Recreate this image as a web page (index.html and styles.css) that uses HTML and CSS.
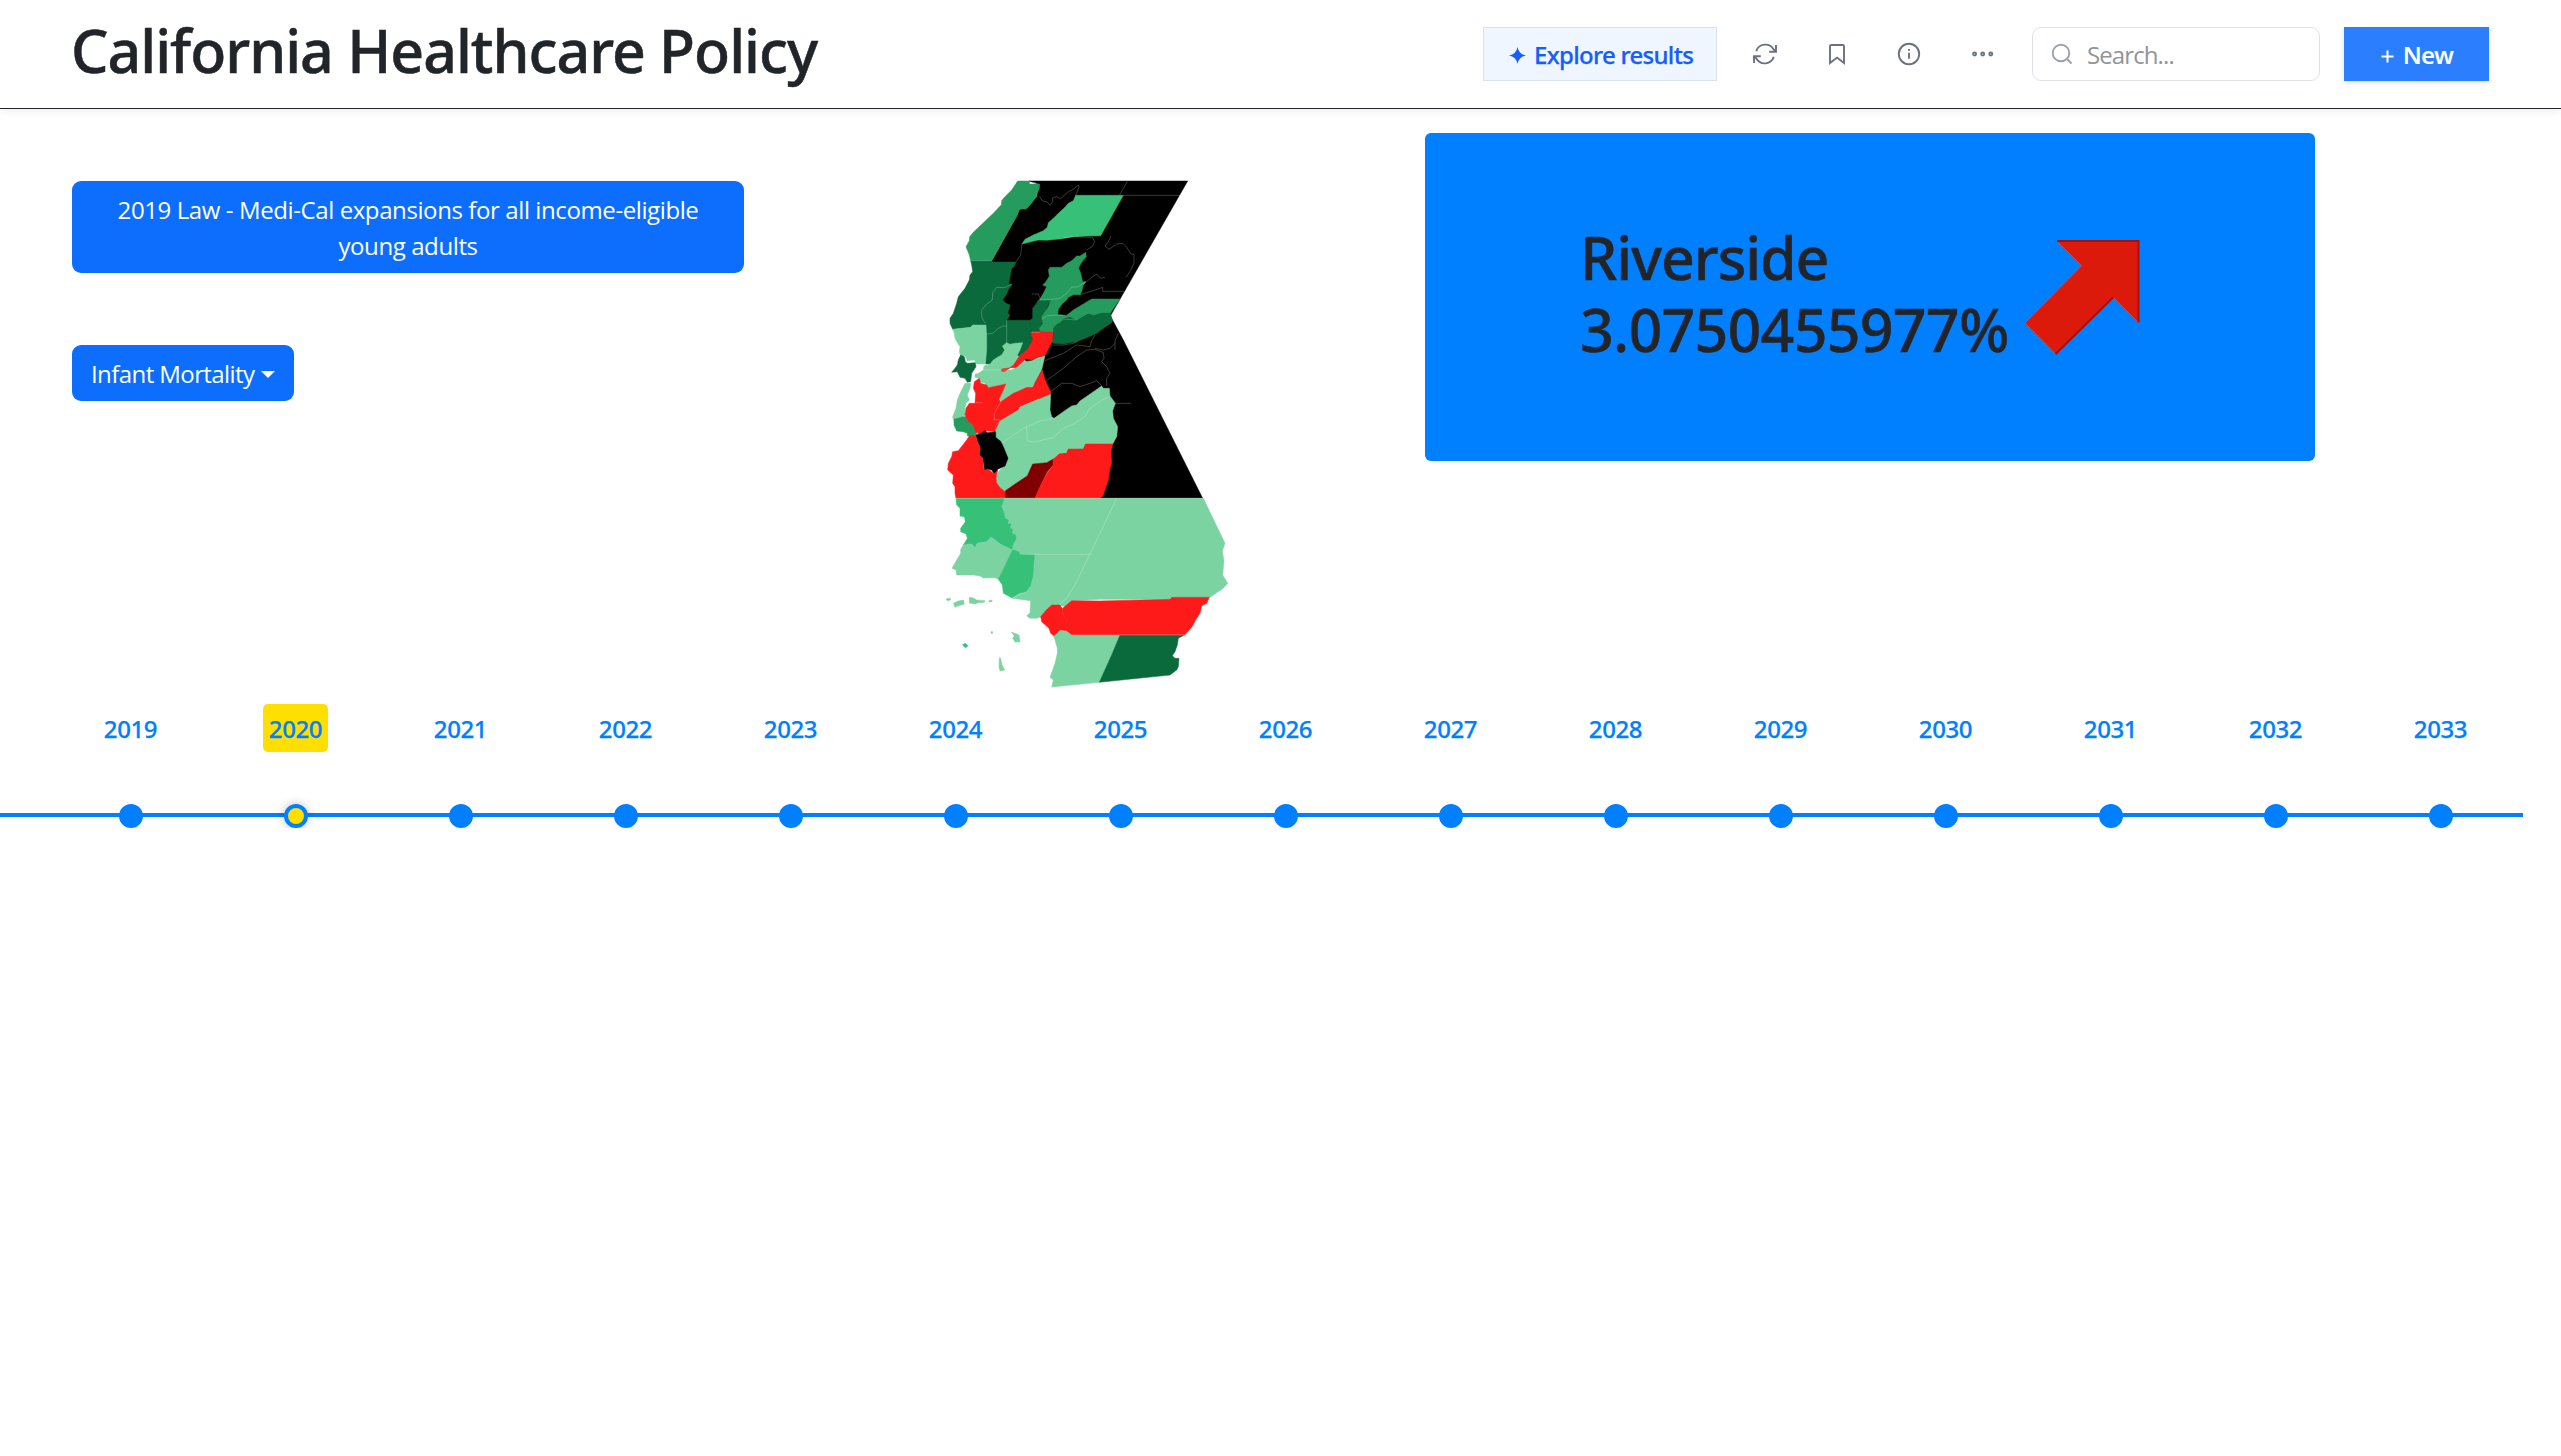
FILE: index.html
```
<!DOCTYPE html>
<html lang="en">
<head>
<meta charset="utf-8">
<title>California Healthcare Policy</title>
<link rel="stylesheet" href="styles.css">
</head>
<body>
<header class="topbar">
  <h1 class="title">California Healthcare Policy</h1>
  <div class="actions">
    <button class="explore"><svg class="star" viewBox="0 0 18 18"><path d="M9 0Q10.300 7.700 18 9Q10.300 10.300 9 18Q7.700 10.300 0 9Q7.700 7.700 9 0Z"/></svg><span>Explore results</span></button>
    <button class="icon refresh" aria-label="Refresh"><svg width="26" height="24" viewBox="0 0 26 24"><path d="M4.2 9.2A9.6 9.6 0 0 1 21.5 7.2L24 9.7M24 3v6.8h-6.8M21.8 14.8A9.6 9.6 0 0 1 4.500 16.800L2 14.300M2 21v-6.800h6.800"/></svg></button>
    <button class="icon bookmark" aria-label="Bookmark"><svg width="18" height="22" viewBox="0 0 18 22"><path d="M2 20V3.200Q2 2 3.200 2H14.800Q16 2 16 3.200V20L9 14.600Z"/></svg></button>
    <button class="icon info" aria-label="Information"><svg width="24" height="24" viewBox="0 0 24 24"><circle cx="12" cy="12" r="10.200"/><path d="M12 10.700V16.800M12 7v1.700"/></svg></button>
    <button class="icon more" aria-label="More"><svg width="24" height="8" viewBox="0 0 24 8"><circle cx="3.600" cy="4" r="1.500"/><circle cx="11.700" cy="4" r="1.500"/><circle cx="19.800" cy="4" r="1.500"/></svg></button>
    <label class="search"><svg width="22" height="22" viewBox="0 0 22 22"><circle cx="10" cy="10" r="8.300"/><path d="M16 16l4.500 4.500"/></svg><input type="text" placeholder="Search..."></label>
    <button class="new"><svg width="13" height="13" viewBox="0 0 13 13"><path d="M6.500 .5v12M.5 6.500h12"/></svg><span>New</span></button>
  </div>
</header>
<main class="dashboard">
  <section class="controls">
    <button class="btn law">2019 Law - Medi-Cal expansions for all income-eligible<br>young adults</button>
    <button class="btn metric">Infant Mortality<i class="caret"></i></button>
  </section>
  <svg class="map" viewBox="0 0 930 1590" width="310" height="530">
    <path class="none" d="M297 33H773L541 438 580 510 818 985H512L400 900 300 600 230 450 185 274 262 135 268 118 290 115 320 80 328 43Z"/>
    <path class="mid" d="M263 33H297L299 42H329L328 55 325 62 320 72V80L313 87 305 100 297 108 288 118 276 116 267 120 262 135 185 272H122L118 255 108 230 118 212 119 200 130 187 190 130 214 104 215 92 222 83 245 60Z"/>
    <path class="bright" d="M437 76H580L512 197 470 198 430 200 395 206 350 211 325 210 300 216 276 222 285 208 310 195 340 182 352 172 355 158 375 140 385 130 405 112 415 100 430 92Z"/>
    <path class="dark" d="M122 272H185L190 276H258L252 290 245 295 240 320 236 343H246L235 360 228 375 218 390 228 400 240 405 238 415 233 430 240 435 230 451H300V460L306 485 303 500 309 505 298 530 285 552 262 560 182 582H166L168 465H128L122 472 68 478 60 460V445L70 430 80 400 85 380 105 355 118 330 120 315 128 305 125 285Z"/>
    <path class="dark" d="M325 390H362L352 410 345 430 335 448 338 455 330 470 328 487H306L300 460V451L308 445V415L318 402Z"/>
    <path class="mid" d="M467 247L469 260 460 270 450 285 446 295 452 310 458 335H467L460 345 455 365 450 374 430 374 415 382 410 390 398 400 385 418 383 434 410 436 430 420 455 405 485 387H570L541 430 515 430 490 437 475 432 460 440 440 452 420 442 400 447 385 460 374 470 370 487 330 485 328 475 338 460 335 440 345 425 355 410 362 390H328L340 370 350 350 338 345 348 335 358 318 355 300 360 292H395L410 280 425 272 440 258 450 258Z"/>
    <path class="dark" d="M541 430L547 450 545 458 520 475 500 490 470 503 440 515 420 518 400 522 370 520 365 515 372 487 370 475 385 460 400 447 420 442 440 452 460 440 475 432 490 437 515 430Z"/>
    <path class="light" d="M68 478L122 472 128 465H168L170 500V540L166 582H140L133 570 112 572 105 557H92L88 545 90 530 82 518 75 505 73 490Z"/>
    <path class="dark" d="M92 555L103 560 106 575 112 580 136 578 138 590 125 610 122 635 112 637 105 625 90 622 82 605 65 607 75 595 82 585 85 570Z"/>
    <path class="light" d="M217 528L230 518 240 523 255 520 278 518 270 540 262 555 268 565 250 588 235 597 215 600 250 600 235 630 230 641 200 648 170 655 165 640 150 635 148 625 135 622V613L145 610 160 600 162 588 180 582 190 570 205 560 215 555 224 540Z"/>
    <path class="light" d="M345 557L335 600 322 625 308 650H290L250 670 215 692 207 688 212 675 228 645 245 600 265 588 280 575 305 572 325 562Z"/>
    <path class="red" d="M306 485L370 487 366 515 345 557 325 560 305 570 288 566 275 578 258 593H240L225 604H215V597L238 594 250 586 262 568 270 556 285 545 295 535 305 515 309 505 303 498Z"/>
    <path class="light" d="M105 640H122L120 655 112 675 118 690 108 700 105 715V735L95 743 70 750 68 740 78 715 82 690 88 675 95 660Z"/>
    <path class="mid" d="M72 748L100 740H108L115 755 132 765 137 778 140 792 130 798H112L112 790 100 785 80 783 72 765Z"/>
    <path class="red" d="M133 635L148 625 152 640 170 645 175 653 228 642 207 688 212 695 250 670 290 652H308L325 620 337 600 345 630 362 665V672L270 710 265 720 210 755 197 785 170 782 150 795 137 785 130 765 115 755 105 735 108 715 118 700H135L137 670 130 655Z"/>
    <path class="light" d="M210 753L265 720 272 710 362 673 360 720 365 740 372 745 400 725 425 708 440 705 450 693 515 648 520 655 538 655 540 678 556 700 548 722 550 745 563 770 560 800 548 822H467L460 837H415L410 850 388 852 370 867 350 878 308 882 292 915 270 932 225 962 215 957 200 935 198 925 205 905 225 885 233 865 222 835 215 818 197 805V782Z"/>
    <path class="none" d="M137 795L150 792 165 782 172 788 197 785V802L213 815 222 835 234 865 225 888 203 898 200 905 193 912 185 900 175 898 163 902 162 888 158 865 148 855 150 830 142 815Z"/>
    <path class="red" d="M110 810L118 798 137 795 143 820 150 830 148 855 158 865 162 900 175 898 193 912 203 900 198 925 200 938 212 955 226 965V985H78L75 970V950L68 940 70 915 53 900 55 880 65 860 68 845 85 842Z"/>
    <path class="max" d="M226 962L292 917 308 882 350 878 370 867V885L352 905 335 940 315 985H226Z"/>
    <path class="red" d="M370 867L388 852 410 850 415 837H460L467 822H548L543 845 545 880 540 895 535 930 528 950 520 975 512 985H315L335 940 352 908 370 885Z"/>
    <path class="light" d="M217 985H820L885 1120 877 1143 882 1172 878 1215 893 1240 880 1255 840 1282H722L720 1288H508L425 1292 405 1310 388 1305H365L348 1318 332 1340 322 1345H300L290 1338 300 1328 302 1292 270 1288 245 1285 240 1200 210 1020Z"/>
    <path class="bright" d="M78 985H222L214 1010 222 1030 225 1045 235 1050 233 1062H243L240 1075 248 1078 245 1090 257 1095 258 1108 250 1120 245 1140 210 1122 195 1110 183 1102 170 1115 142 1120 135 1133 125 1122 100 1125 112 1105 108 1092 92 1085V1075L106 1055 103 1040 90 1038V1015L80 1005Z"/>
    <path class="light" d="M100 1125L125 1122 135 1133 142 1120 170 1115 183 1102 195 1110 210 1122 248 1140 205 1228 195 1223 160 1224 150 1218 130 1215H80L78 1200 66 1195 80 1170 92 1150V1138Z"/>
    <path class="bright" d="M248 1140L265 1145 270 1153 313 1155 308 1220 300 1250 290 1265 270 1268 245 1283 220 1270 217 1245 205 1228Z"/>
    <path class="light" d="M390 1382H410L425 1395H570L545 1455 508 1537 365 1551 370 1530 360 1522 368 1500 375 1480 382 1450V1435L375 1410 370 1397Z"/>
    <path class="dark" d="M570 1395H763L745 1405 742 1425 735 1445 727 1457 735 1465H747L745 1490 740 1500 720 1515 508 1537 545 1455Z"/>
    <path class="red" d="M332 1340L348 1320 365 1305H390L398 1318 400 1335 412 1355 400 1370 390 1380 372 1397 362 1390 357 1375 335 1355Z"/>
    <path class="red" d="M398 1315L425 1292 508 1293 720 1288 725 1282H838L830 1300 815 1307 810 1330 800 1345 785 1372 765 1394H425L410 1382 390 1380 412 1355 400 1335Z"/>
    <path class="light" d="M48 1287L60 1284 62 1290 52 1292ZM70 1300L85 1293 100 1290 103 1303 90 1306 75 1312ZM118 1282L130 1284 140 1290 165 1292 163 1297 145 1298 135 1302 118 1299ZM176 1292L186 1290V1295L178 1296ZM183 1385H188V1390H183ZM244 1386L254 1390 267 1395 270 1416H255L248 1405 253 1398ZM208 1463L212 1465 216 1485 224 1500 210 1503 207 1490Z"/>
    <path class="bright" d="M98 1424L106 1420 114 1427 108 1433 102 1430Z"/>
    <g class="borders">
      <path d="M299 42L318 37M328 80L338 93 350 95 360 106 368 95V84L380 80 392 86 415 65 430 58 445 45 447 52 437 76M568 76L592 35M580 76H750M122 272H185M487 202L494 215 488 228 470 240M400 203L425 200 487 202M543 198L535 215 525 228 537 238 560 222 578 220 590 232 603 252 612 253V278L603 300 588 322M460 343L485 322 500 312 512 325 525 322M276 222L272 255 258 276M246 343L222 353 200 352 188 368 187 390 170 402 155 420V440L165 460M305 372L325 372 332 390 360 388 388 386 410 370 425 352 445 350 467 335M450 374L490 362 518 352V364H582M170 492L188 490 205 475 220 468 230 468V520M230 451V468M335 448L350 438 375 435 400 436M385 460L400 447 440 450M303 487L330 487M365 525L400 525 430 520 440 515"/>
      <path d="M345 572L400 550 440 525 480 530 485 512 495 495M345 635L400 595 440 560 470 540 495 538 520 548 522 565 515 575 530 590 540 610 530 625 530 648M362 665L395 640 425 640 450 650 480 640 500 632 515 648M555 540V512L565 490M495 535L520 540 540 535 555 520M555 700H603M160 600H235M212 695L193 730V750H210M137 698H158M215 820L265 785 290 770 330 753 370 745M290 770L292 812 310 817 370 802 400 775 430 762 465 740 475 720 500 700 535 680M197 785V765L210 753"/>
      <path d="M78 985H818M560 985L480 1152 435 1245 410 1285 388 1302M270 1153H480M245 1285L290 1265 300 1250M570 1395H763"/>
    </g>
  </svg>
  <section class="result">
    <div class="figures"><div>Riverside</div><div class="value">3.0750455977%</div></div>
    <svg class="arrow" width="118" height="118" viewBox="0 0 118 118"><path d="M34 2H115.500V83.500L90.300 58.300 32.600 115 2 84 58.700 26.700Z"/><path class="edge" d="M34 2H115.500V83.500M90.300 58.300L32.600 115"/></svg>
  </section>
</main>
<nav class="timeline">
  <ol class="years">
    <li><span>2019</span></li><li class="active"><span>2020</span></li><li><span>2021</span></li><li><span>2022</span></li><li><span>2023</span></li><li><span>2024</span></li><li><span>2025</span></li><li><span>2026</span></li><li><span>2027</span></li><li><span>2028</span></li><li><span>2029</span></li><li><span>2030</span></li><li><span>2031</span></li><li><span>2032</span></li><li><span>2033</span></li>
  </ol>
</nav>
</body>
</html>
```
FILE: styles.css
```
*, *::after { box-sizing: border-box; }
body {
  margin: 0;
  background: #fff;
  color: #212529;
  font: 24px/36px "Open Sans", "Noto Sans", sans-serif;
}
button { font: inherit; cursor: pointer; }
svg { display: block; flex: none; }

/* Header */
.topbar {
  display: flex;
  justify-content: space-between;
  align-items: flex-start;
  height: 109px;
  padding: 0 72px 0 73px;
  border-bottom: 1px solid #212529;
  box-shadow: 0 3px 8px rgba(0, 0, 0, .06);
}
.title {
  margin: 14px 0 0 -2px;
  font: 500 59px/72px "Noto Sans", sans-serif;
  letter-spacing: -1px;
  white-space: nowrap;
  -webkit-text-stroke: .5px;
}
.actions {
  display: flex;
  align-items: center;
  height: 54px;
  margin-top: 27px;
}
.explore {
  display: flex;
  align-items: center;
  gap: 8px;
  width: 234px;
  height: 54px;
  padding: 2px 0 0 25px;
  border: 1px solid #dbe2ea;
  background: #eff6ff;
  color: #155dfc;
  font: 500 24px/36px "Noto Sans", sans-serif;
  letter-spacing: -.7px;
  white-space: nowrap;
  -webkit-text-stroke: .25px;
}
.star { width: 17px; height: 17px; fill: #155dfc; }
.icon {
  padding: 0;
  border: 0;
  background: none;
}
.icon svg {
  fill: none;
  stroke: #6a7282;
  stroke-width: 1.9;
}
.refresh { margin-left: 35px; }
.bookmark { margin-left: 50px; }
.info { margin-left: 51px; }
.more { margin-left: 50px; }
.search {
  display: flex;
  align-items: center;
  gap: 14px;
  width: 288px;
  height: 54px;
  margin: 0 24px 0 37px;
  padding-left: 18px;
  border: 1px solid #dee2e6;
  border-radius: 9px;
}
.search svg { fill: none; stroke: #99a1af; stroke-width: 1.9; }
.search input {
  width: 200px;
  padding: 2px 0 0;
  border: 0;
  outline: 0;
  background: none;
  font: inherit;
  letter-spacing: -.9px;
}
.search input::placeholder { color: #8f959b; }
.new {
  display: flex;
  justify-content: center;
  align-items: center;
  gap: 9px;
  width: 145px;
  height: 54px;
  padding: 2px 0 0 1px;
  border: 0;
  background: #2b7fff;
  color: #fff;
  font: 600 24px/36px "Noto Sans", sans-serif;
  letter-spacing: -.7px;
  box-shadow: 0 2px 5px rgba(0, 0, 0, .12);
}
.new svg { margin-top: 3px; fill: none; stroke: #fff; stroke-width: 2; }

/* Dashboard */
.dashboard {
  display: grid;
  grid-template-columns: 858px 495px 890px;
  align-items: start;
  height: 595px;
  padding-left: 72px;
}
.controls {
  display: flex;
  flex-direction: column;
  align-items: flex-start;
  gap: 72px;
  padding-top: 72px;
}
.btn {
  padding: 11px 18px 9px;
  border: 0;
  border-radius: 9px;
  background: #0d6efd;
  color: #fff;
  white-space: nowrap;
}
.law { width: 672px; height: 92px; letter-spacing: -.4px; }
.metric {
  display: flex;
  align-items: center;
  gap: 7px;
  width: 222px;
  height: 56px;
  padding-left: 19px;
  letter-spacing: -.58px;
}
.caret {
  border: 7px solid transparent;
  border-top-color: #fff;
  border-bottom: 0;
}

/* County map, coloured by change in the metric */
.map { margin-top: 61px; stroke-width: 1.5; stroke-linejoin: round; }
.none { fill: #000; stroke: #000; }
.light { fill: #7bd3a2; stroke: #7bd3a2; }
.bright { fill: #36c078; stroke: #36c078; }
.mid { fill: #259b5d; stroke: #259b5d; }
.dark { fill: #0b6a3b; stroke: #0b6a3b; }
.red { fill: #ff1a1a; stroke: #ff1a1a; }
.max { fill: #800000; stroke: #800000; }
.borders { fill: none; stroke: rgba(255, 255, 255, .27); stroke-width: 2.5; }

/* Result card */
.result {
  display: flex;
  align-items: center;
  width: 890px;
  height: 328px;
  margin-top: 24px;
  padding: 0 0 8px 155px;
  border-radius: 6px;
  background: #0080ff;
}
.figures {
  width: 442px;
  font: 500 59px/72px "Noto Sans", sans-serif;
  letter-spacing: -1.1px;
  white-space: nowrap;
  -webkit-text-stroke: .5px;
}
.value { letter-spacing: -.7px; }
.arrow { margin: 9px 0 0 1px; fill: #db1a0b; stroke: #c04a50; stroke-width: 1; }
.arrow .edge { fill: none; stroke: #a80f0a; stroke-width: 2; }

/* Timeline */
.timeline {
  width: 2523px;
  height: 124px;
  padding-left: 48px;
  background: linear-gradient(#0080ff, #0080ff) 0 109.3px / 100% 4.3px no-repeat;
}
.years {
  display: grid;
  grid-template-columns: repeat(15, 165px);
  margin: 0;
  padding: 0;
  list-style: none;
  color: #0080ff;
  font: 500 24px/36px "Noto Sans", sans-serif;
  letter-spacing: -.4px;
  -webkit-text-stroke: .25px;
}
.years li {
  display: flex;
  flex-direction: column;
  align-items: center;
  justify-content: space-between;
  height: 124px;
}
.years span {
  height: 48px;
  padding: 7px 6px 5px;
  border-radius: 5px;
}
.years li::after {
  content: "";
  width: 24px;
  height: 24px;
  border: 4px solid #0080ff;
  border-radius: 50%;
  background: #0080ff;
}
.years .active span { background: #ffdf00; }
.years .active::after { background: #ffdf00; box-shadow: 0 0 10px rgba(0, 0, 0, .25); }
```
